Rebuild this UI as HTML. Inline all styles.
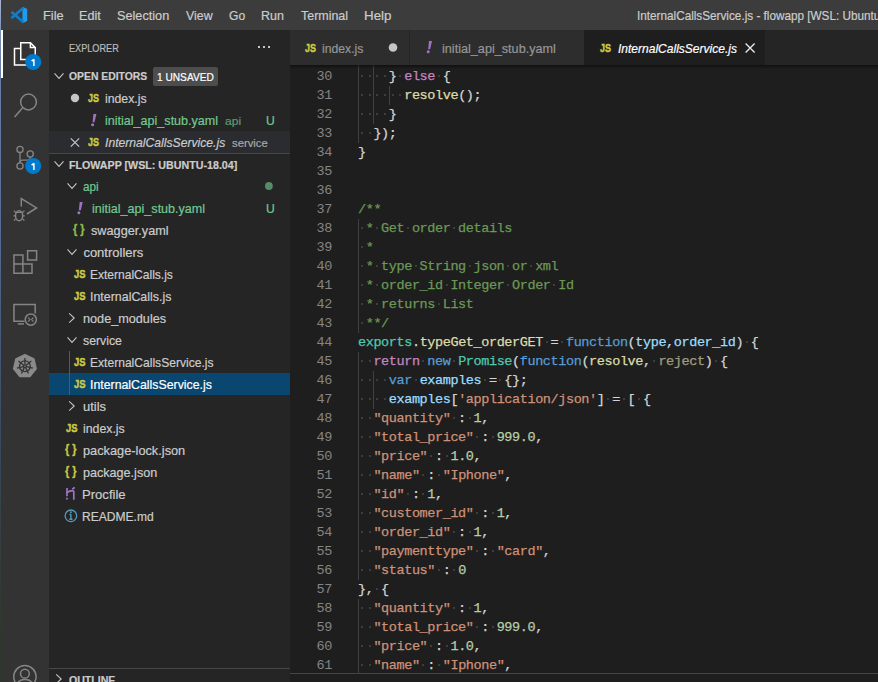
<!DOCTYPE html><html><head><meta charset="utf-8"><style>
*{margin:0;padding:0;box-sizing:border-box}
html,body{width:878px;height:682px;overflow:hidden;background:#1e1e1e}
body{position:relative;font-family:"Liberation Sans",sans-serif;font-size:13px;color:#cccccc}
.a{position:absolute}
.t{position:absolute;white-space:pre;height:22px;-webkit-text-stroke:0.2px currentColor}
.ln{position:absolute;left:290px;width:42px;text-align:right;font-family:"Liberation Mono",monospace;font-size:13.5px;letter-spacing:-0.4px;line-height:19px;color:#858585}
.cl{position:absolute;left:358px;white-space:pre;-webkit-text-stroke:0.25px currentColor;font-family:"Liberation Mono",monospace;font-size:13.5px;letter-spacing:-0.4px;line-height:19px;height:19px}
.ig{position:absolute;width:1px;height:19px;background:#404040}
.ws{position:absolute;width:2px;height:2px;background:#3d3d3d}
svg{position:absolute;left:0;top:0;overflow:visible}
</style></head><body>

<div class="a" style="left:0;top:0;width:1px;height:682px;background:linear-gradient(#a9b6d3 0px,#7f93b8 30px,#6a80a8 60px,#52698f 250px,#3a4a62 430px,#2f3b30 600px,#2c362c 682px)"></div>
<div class="a" style="left:1px;top:0;width:877px;height:30px;background:#3c3c3c"></div>
<div class="a" style="left:1px;top:30px;width:48px;height:652px;background:#333333"></div>
<div class="a" style="left:49px;top:30px;width:241px;height:652px;background:#252526"></div>
<div class="a" style="left:290px;top:30px;width:588px;height:35px;background:#252526"></div>
<div class="t" style="left:43.12px;top:5px;font:normal normal 13px/22px 'Liberation Sans',sans-serif;color:#cccccc;transform:scaleX(0.9839);transform-origin:0 0;">File</div>
<div class="t" style="left:78.93px;top:5px;font:normal normal 13px/22px 'Liberation Sans',sans-serif;color:#cccccc;transform:scaleX(0.9684);transform-origin:0 0;">Edit</div>
<div class="t" style="left:117.40px;top:5px;font:normal normal 13px/22px 'Liberation Sans',sans-serif;color:#cccccc;transform:scaleX(0.9765);transform-origin:0 0;">Selection</div>
<div class="t" style="left:185.80px;top:5px;font:normal normal 13px/22px 'Liberation Sans',sans-serif;color:#cccccc;transform:scaleX(0.9526);transform-origin:0 0;">View</div>
<div class="t" style="left:229.10px;top:5px;font:normal normal 13px/22px 'Liberation Sans',sans-serif;color:#cccccc;transform:scaleX(0.9292);transform-origin:0 0;">Go</div>
<div class="t" style="left:261.14px;top:5px;font:normal normal 13px/22px 'Liberation Sans',sans-serif;color:#cccccc;transform:scaleX(0.9594);transform-origin:0 0;">Run</div>
<div class="t" style="left:300.90px;top:5px;font:normal normal 13px/22px 'Liberation Sans',sans-serif;color:#cccccc;transform:scaleX(0.9566);transform-origin:0 0;">Terminal</div>
<div class="t" style="left:363.57px;top:5px;font:normal normal 13px/22px 'Liberation Sans',sans-serif;color:#cccccc;transform:scaleX(1.0272);transform-origin:0 0;">Help</div>
<div class="t" style="left:636.70px;top:5px;font:normal normal 13px/22px 'Liberation Sans',sans-serif;color:#cccccc;transform:scaleX(0.9029);transform-origin:0 0;">InternalCallsService.js - flowapp [WSL: Ubuntu-18.04]</div>
<svg width="878" height="682">
<polygon points="22.4,6.8 27.2,9 27.2,21 22.4,23.2" fill="#1f9cf0"/>
<line x1="22.6" y1="8.6" x2="12.2" y2="17.4" stroke="#0d7ecc" stroke-width="2.6" stroke-linecap="round"/>
<line x1="12.2" y1="12.6" x2="22.6" y2="21.4" stroke="#0d7ecc" stroke-width="2.6" stroke-linecap="round"/>
</svg>
<div class="a" style="left:1px;top:30px;width:2px;height:48px;background:#ffffff"></div>
<svg width="878" height="682" fill="none" stroke-width="1.5">
<g stroke="#ffffff">
<path d="M20.75 47.5 V42.75 H30.4 L35.25 47.6 V59.5 H20.75 V47.5"/>
<path d="M30.4 42.75 V47.6 H35.25"/>
<path d="M20.75 48.5 H14.5 V65.1 H28"/>
</g>
<circle cx="33.2" cy="62" r="8" fill="#007acc" stroke="none"/>
<g stroke="#858585">
<circle cx="28.5" cy="102" r="7.9"/>
<line x1="22.9" y1="107.6" x2="14.6" y2="116.9"/>
<circle cx="20" cy="149.4" r="3.1" stroke-width="1.3"/>
<circle cx="20" cy="166" r="3.1" stroke-width="1.3"/>
<circle cx="30.2" cy="154" r="3.1" stroke-width="1.3"/>
<line x1="20" y1="152.5" x2="20" y2="162.9" stroke-width="1.3"/>
<path d="M30.2 157.1 V157.8 Q30.2 160.2 27.8 160.2 H22.4 Q20 160.2 20 162.6" stroke-width="1.3"/>
<path d="M21.3 206.5 V198.6 L36.6 207.9 L26.9 214" />
<ellipse cx="19.1" cy="215.8" rx="3.6" ry="5"/>
<path d="M15.5 212.5 H22.7 M13.4 215.8 H15.5 M22.7 215.8 H24.8 M13.8 210.8 L15.6 212.4 M24.4 210.8 L22.6 212.4 M13.8 220.5 L15.6 219 M24.4 220.5 L22.6 219" stroke-width="1.2"/>
<path d="M13.95 255 H22.9 V273.2 H13.95 Z M13.95 264 H32 V273.2 H22.9 M27.6 250.7 H36.6 V259.9 H27.6 Z"/>
<path d="M24.5 321.2 H13.95 V304.6 H35.2 V313.5"/>
<line x1="17.8" y1="323.9" x2="24" y2="323.9"/>
<circle cx="30.8" cy="319.6" r="5.6"/>
<path d="M28.2 317.6 L30 319.6 L28.2 321.6 M33.4 317.6 L31.6 319.6 L33.4 321.6" stroke-width="1.1"/>
<circle cx="24.9" cy="676.8" r="11.2"/>
<circle cx="24.9" cy="673.7" r="4.4"/>
<path d="M16.8 684 Q19 679.4 24.9 679.4 Q30.8 679.4 33 684"/>
</g>
</svg>
<svg width="878" height="682"><polygon points="24.90,354.70 33.89,359.03 36.11,368.76 29.89,376.56 19.91,376.56 13.69,368.76 15.91,359.03" fill="#8a8a8a" stroke="#8a8a8a" stroke-width="1.5" stroke-linejoin="round"/><g stroke="#333333" stroke-width="1.3" fill="none"><circle cx="24.90" cy="366.20" r="5.4"/><circle cx="24.90" cy="366.20" r="1.4"/><line x1="24.90" y1="364.60" x2="24.90" y2="358.00"/><line x1="26.15" y1="365.20" x2="31.31" y2="361.09"/><line x1="26.46" y1="366.56" x2="32.89" y2="368.02"/><line x1="25.59" y1="367.64" x2="28.46" y2="373.59"/><line x1="24.21" y1="367.64" x2="21.34" y2="373.59"/><line x1="23.34" y1="366.56" x2="16.91" y2="368.02"/><line x1="23.65" y1="365.20" x2="18.49" y2="361.09"/></g></svg>
<svg width="878" height="682"><path d="M33.9 59.3 V65.9 M34 59.4 L31.6 61.2" stroke="#fff" stroke-width="1.5" fill="none"/></svg>
<svg width="878" height="682"><circle cx="33.2" cy="166" r="8" fill="#007acc"/></svg>
<svg width="878" height="682"><path d="M33.9 163.3 V169.9 M34 163.4 L31.6 165.2" stroke="#fff" stroke-width="1.5" fill="none"/></svg>
<div class="t" style="left:69.20px;top:37px;font:normal normal 11px/22px 'Liberation Sans',sans-serif;color:#bbbbbb;transform:scaleX(0.8305);transform-origin:0 0;">EXPLORER</div>
<div class="a" style="left:258px;top:46px;width:2px;height:2px;background:#c5c5c5"></div>
<div class="a" style="left:263px;top:46px;width:2px;height:2px;background:#c5c5c5"></div>
<div class="a" style="left:268px;top:46px;width:2px;height:2px;background:#c5c5c5"></div>
<svg width="878" height="682"><path d="M54.5 73.4 L59.0 78.4 L63.5 73.4" fill="none" stroke="#c5c5c5" stroke-width="1.1"/></svg>
<div class="t" style="left:69.20px;top:65px;font:normal bold 11px/22px 'Liberation Sans',sans-serif;color:#cccccc;transform:scaleX(0.9420);transform-origin:0 0;">OPEN EDITORS</div>
<div class="a" style="left:153px;top:67px;width:65px;height:19px;background:#4d4d4d;border-radius:2px"></div>
<div class="t" style="left:157.00px;top:67px;font:normal normal 11px/21px 'Liberation Sans',sans-serif;color:#ffffff;transform:scaleX(0.9222);transform-origin:0 0;">1 UNSAVED</div>
<svg width="878" height="682"><circle cx="75" cy="98" r="4.2" fill="#c5c5c5"/></svg>
<div class="t" style="left:88.00px;top:87px;font:normal bold 11px/22px 'Liberation Sans',sans-serif;color:#cbcb41;transform:scaleX(0.8157);transform-origin:0 0;-webkit-text-stroke:0.45px #cbcb41;">JS</div>
<div class="t" style="left:105.00px;top:88px;font:normal normal 13px/22px 'Liberation Sans',sans-serif;color:#cccccc;transform:scaleX(0.9422);transform-origin:0 0;">index.js</div>
<svg width="878" height="682"><polygon points="93.4,114.0 96.4,114.0 94.5,122.2 92.6,122.2" fill="#a074c4"/><circle cx="92.6" cy="124.8" r="1.5" fill="#a074c4"/></svg>
<div class="t" style="left:105.30px;top:110px;font:normal normal 13px/22px 'Liberation Sans',sans-serif;color:#73c991;transform:scaleX(0.9661);transform-origin:0 0;">initial_api_stub.yaml</div>
<div class="t" style="left:224.90px;top:110px;font:normal normal 11.5px/22px 'Liberation Sans',sans-serif;color:#73c991;transform:scaleX(1.0479);transform-origin:0 0;opacity:.7;">api</div>
<div class="t" style="left:266.00px;top:110px;font:normal normal 12px/22px 'Liberation Sans',sans-serif;color:#73c991;transform:scaleX(1.0125);transform-origin:0 0;">U</div>
<div class="a" style="left:49px;top:131px;width:241px;height:22px;background:#2b2c2f"></div>
<svg width="878" height="682"><path d="M70.8 138.3 L79.2 146.7 M79.2 138.3 L70.8 146.7" stroke="#c5c5c5" stroke-width="1.2"/></svg>
<div class="t" style="left:88.00px;top:131px;font:normal bold 11px/22px 'Liberation Sans',sans-serif;color:#cbcb41;transform:scaleX(0.8157);transform-origin:0 0;-webkit-text-stroke:0.45px #cbcb41;">JS</div>
<div class="t" style="left:105.00px;top:132px;font:italic normal 13px/22px 'Liberation Sans',sans-serif;color:#cccccc;transform:scaleX(0.9349);transform-origin:0 0;">InternalCallsService.js</div>
<div class="t" style="left:231.70px;top:132px;font:normal normal 11.5px/22px 'Liberation Sans',sans-serif;color:#a8a8a8;transform:scaleX(0.9797);transform-origin:0 0;">service</div>
<div class="a" style="left:49px;top:153px;width:241px;height:1px;background:#474748"></div>
<svg width="878" height="682"><path d="M54.5 161.4 L59.0 166.4 L63.5 161.4" fill="none" stroke="#c5c5c5" stroke-width="1.1"/></svg>
<div class="t" style="left:69.20px;top:154px;font:normal bold 11px/22px 'Liberation Sans',sans-serif;color:#cccccc;transform:scaleX(0.9707);transform-origin:0 0;">FLOWAPP [WSL: UBUNTU-18.04]</div>
<div class="a" style="left:49px;top:373px;width:241px;height:22px;background:#094771"></div>
<div class="a" style="left:69px;top:351px;width:1px;height:44px;background:#585858"></div>
<svg width="878" height="682"><path d="M67.5 183.4 L72.0 188.4 L76.5 183.4" fill="none" stroke="#c5c5c5" stroke-width="1.1"/></svg>
<div class="t" style="left:82.90px;top:175.5px;font:normal normal 13px/22px 'Liberation Sans',sans-serif;color:#73c991;transform:scaleX(0.8992);transform-origin:0 0;">api</div>
<svg width="878" height="682"><polygon points="79.7,202.0 82.7,202.0 80.8,210.2 78.9,210.2" fill="#a074c4"/><circle cx="78.9" cy="212.8" r="1.5" fill="#a074c4"/></svg>
<div class="t" style="left:91.60px;top:197.5px;font:normal normal 13px/22px 'Liberation Sans',sans-serif;color:#73c991;transform:scaleX(0.9661);transform-origin:0 0;">initial_api_stub.yaml</div>
<div class="t" style="left:73.30px;top:218px;font:normal bold 12.5px/22px 'Liberation Sans',sans-serif;color:#8dc149;transform:scaleX(0.8772);transform-origin:0 0;-webkit-text-stroke:0.3px #8dc149;">{ }</div>
<div class="t" style="left:91.30px;top:219.5px;font:normal normal 13px/22px 'Liberation Sans',sans-serif;color:#cccccc;transform:scaleX(0.9762);transform-origin:0 0;">swagger.yaml</div>
<svg width="878" height="682"><path d="M67.5 249.4 L72.0 254.4 L76.5 249.4" fill="none" stroke="#c5c5c5" stroke-width="1.1"/></svg>
<div class="t" style="left:83.40px;top:241.5px;font:normal normal 13px/22px 'Liberation Sans',sans-serif;color:#cccccc;">controllers</div>
<div class="t" style="left:73.60px;top:263px;font:normal bold 11px/22px 'Liberation Sans',sans-serif;color:#cbcb41;transform:scaleX(0.8538);transform-origin:0 0;-webkit-text-stroke:0.45px #cbcb41;">JS</div>
<div class="t" style="left:90.48px;top:263.5px;font:normal normal 13px/22px 'Liberation Sans',sans-serif;color:#cccccc;transform:scaleX(0.9250);transform-origin:0 0;">ExternalCalls.js</div>
<div class="t" style="left:73.60px;top:285px;font:normal bold 11px/22px 'Liberation Sans',sans-serif;color:#cbcb41;transform:scaleX(0.8538);transform-origin:0 0;-webkit-text-stroke:0.45px #cbcb41;">JS</div>
<div class="t" style="left:90.45px;top:285.5px;font:normal normal 13px/22px 'Liberation Sans',sans-serif;color:#cccccc;transform:scaleX(0.9545);transform-origin:0 0;">InternalCalls.js</div>
<svg width="878" height="682"><path d="M69.2 313.4 L74.2 318.0 L69.2 322.6" fill="none" stroke="#c5c5c5" stroke-width="1.1"/></svg>
<div class="t" style="left:83.40px;top:307.5px;font:normal normal 13px/22px 'Liberation Sans',sans-serif;color:#cccccc;transform:scaleX(0.9745);transform-origin:0 0;">node_modules</div>
<svg width="878" height="682"><path d="M67.5 337.4 L72.0 342.4 L76.5 337.4" fill="none" stroke="#c5c5c5" stroke-width="1.1"/></svg>
<div class="t" style="left:83.40px;top:329.5px;font:normal normal 13px/22px 'Liberation Sans',sans-serif;color:#cccccc;transform:scaleX(0.9451);transform-origin:0 0;">service</div>
<div class="t" style="left:73.60px;top:351px;font:normal bold 11px/22px 'Liberation Sans',sans-serif;color:#cbcb41;transform:scaleX(0.8538);transform-origin:0 0;-webkit-text-stroke:0.45px #cbcb41;">JS</div>
<div class="t" style="left:90.47px;top:351.5px;font:normal normal 13px/22px 'Liberation Sans',sans-serif;color:#cccccc;transform:scaleX(0.9288);transform-origin:0 0;">ExternalCallsService.js</div>
<div class="t" style="left:73.60px;top:373px;font:normal bold 11px/22px 'Liberation Sans',sans-serif;color:#cbcb41;transform:scaleX(0.8538);transform-origin:0 0;-webkit-text-stroke:0.45px #cbcb41;">JS</div>
<div class="t" style="left:90.45px;top:373.5px;font:normal normal 13px/22px 'Liberation Sans',sans-serif;color:#ffffff;transform:scaleX(0.9477);transform-origin:0 0;">InternalCallsService.js</div>
<svg width="878" height="682"><path d="M69.2 401.4 L74.2 406.0 L69.2 410.6" fill="none" stroke="#c5c5c5" stroke-width="1.1"/></svg>
<div class="t" style="left:83.20px;top:395.5px;font:normal normal 13px/22px 'Liberation Sans',sans-serif;color:#cccccc;transform:scaleX(0.9950);transform-origin:0 0;">utils</div>
<div class="t" style="left:65.70px;top:417px;font:normal bold 11px/22px 'Liberation Sans',sans-serif;color:#cbcb41;transform:scaleX(0.8538);transform-origin:0 0;-webkit-text-stroke:0.45px #cbcb41;">JS</div>
<div class="t" style="left:83.20px;top:417.5px;font:normal normal 13px/22px 'Liberation Sans',sans-serif;color:#cccccc;transform:scaleX(0.9467);transform-origin:0 0;">index.js</div>
<div class="t" style="left:65.00px;top:438px;font:normal bold 12.5px/22px 'Liberation Sans',sans-serif;color:#cbcb41;transform:scaleX(0.8772);transform-origin:0 0;-webkit-text-stroke:0.3px #cbcb41;">{ }</div>
<div class="t" style="left:83.20px;top:439.5px;font:normal normal 13px/22px 'Liberation Sans',sans-serif;color:#cccccc;transform:scaleX(0.9824);transform-origin:0 0;">package-lock.json</div>
<div class="t" style="left:65.00px;top:460px;font:normal bold 12.5px/22px 'Liberation Sans',sans-serif;color:#cbcb41;transform:scaleX(0.8772);transform-origin:0 0;-webkit-text-stroke:0.3px #cbcb41;">{ }</div>
<div class="t" style="left:83.20px;top:461.5px;font:normal normal 13px/22px 'Liberation Sans',sans-serif;color:#cccccc;transform:scaleX(0.9688);transform-origin:0 0;">package.json</div>
<svg width="878" height="682"><path d="M67 487.9 V496.2 M67 492.6 Q69.5 490.6 72.6 490.6 Q73.8 490.6 73.8 492 V499.8 M72.2 488.9 L74.8 487.4" fill="none" stroke="#a074c4" stroke-width="1.7"/><polygon points="66.2,497.3 68.6,498.7 66.2,500" fill="#a074c4"/></svg>
<div class="t" style="left:82.19px;top:483.5px;font:normal normal 13px/22px 'Liberation Sans',sans-serif;color:#cccccc;transform:scaleX(1.0067);transform-origin:0 0;">Procfile</div>
<svg width="878" height="682"><circle cx="70.9" cy="515.8" r="5.8" fill="none" stroke="#519aba" stroke-width="1.3"/><path d="M70.9 514.4 V519.2 M69.4 514.4 H71.2 M69.3 519.3 H72.5" stroke="#519aba" stroke-width="1.4" fill="none"/><circle cx="70.9" cy="512.3" r="0.95" fill="#519aba"/></svg>
<div class="t" style="left:82.27px;top:505.5px;font:normal normal 13px/22px 'Liberation Sans',sans-serif;color:#cccccc;transform:scaleX(0.9282);transform-origin:0 0;">README.md</div>
<svg width="878" height="682"><circle cx="268.9" cy="186" r="3.9" fill="#73c991" opacity=".62"/></svg>
<div class="t" style="left:266.00px;top:198px;font:normal normal 12px/22px 'Liberation Sans',sans-serif;color:#73c991;transform:scaleX(1.0125);transform-origin:0 0;">U</div>
<div class="a" style="left:49px;top:668px;width:241px;height:1px;background:#474748"></div>
<svg width="878" height="682"><path d="M56.2 674.4 L61.2 679.0 L56.2 683.6" fill="none" stroke="#c5c5c5" stroke-width="1.1"/></svg>
<div class="t" style="left:69.20px;top:669px;font:normal bold 11px/22px 'Liberation Sans',sans-serif;color:#cccccc;transform:scaleX(0.9596);transform-origin:0 0;">OUTLINE</div>
<div class="a" style="left:290px;top:30px;width:119px;height:35px;background:#2d2d2d"></div>
<div class="a" style="left:410px;top:30px;width:174px;height:35px;background:#2d2d2d"></div>
<div class="a" style="left:584px;top:30px;width:181px;height:35px;background:#1e1e1e"></div>
<div class="t" style="left:304.80px;top:31px;font:normal bold 11px/35px 'Liberation Sans',sans-serif;color:#cbcb41;transform:scaleX(0.8157);transform-origin:0 0;-webkit-text-stroke:0.45px #cbcb41;">JS</div>
<div class="t" style="left:322.30px;top:31px;font:normal normal 13px/35px 'Liberation Sans',sans-serif;color:#969696;transform:scaleX(0.9399);transform-origin:0 0;">index.js</div>
<svg width="878" height="682"><circle cx="393" cy="47.5" r="4.3" fill="#c5c5c5"/></svg>
<svg width="878" height="682"><polygon points="429.0,41.0 432.0,41.0 430.1,49.2 428.2,49.2" fill="#a074c4"/><circle cx="428.2" cy="51.8" r="1.5" fill="#a074c4"/></svg>
<div class="t" style="left:442.00px;top:31px;font:normal normal 13px/35px 'Liberation Sans',sans-serif;color:#969696;transform:scaleX(0.9729);transform-origin:0 0;">initial_api_stub.yaml</div>
<div class="t" style="left:600.00px;top:31px;font:normal bold 11px/35px 'Liberation Sans',sans-serif;color:#cbcb41;transform:scaleX(0.8157);transform-origin:0 0;-webkit-text-stroke:0.45px #cbcb41;">JS</div>
<div class="t" style="left:617.60px;top:31px;font:italic normal 13px/35px 'Liberation Sans',sans-serif;color:#ffffff;transform:scaleX(0.9248);transform-origin:0 0;">InternalCallsService.js</div>
<svg width="878" height="682"><path d="M745.6 43.4 L754.6 52.4 M754.6 43.4 L745.6 52.4" stroke="#e8e8e8" stroke-width="1.35"/></svg>
<div class="ln" style="top:67px">30</div>
<div class="ig" style="left:358.0px;top:65px;height:21px"></div>
<div class="ig" style="left:373.4px;top:65px;height:21px"></div>
<i class="ws" style="left:360.85px;top:75px"></i>
<i class="ws" style="left:368.55px;top:75px"></i>
<i class="ws" style="left:376.25px;top:75px"></i>
<i class="ws" style="left:383.95px;top:75px"></i>
<i class="ws" style="left:399.35px;top:75px"></i>
<i class="ws" style="left:437.85px;top:75px"></i>
<div class="cl" style="top:67px"><span style="color:#d4d4d4;">&nbsp;&nbsp;&nbsp;&nbsp;</span><span style="color:#d4d4d4;">}</span><span style="color:#d4d4d4;">&nbsp;</span><span style="color:#c586c0;">else</span><span style="color:#d4d4d4;">&nbsp;</span><span style="color:#d4d4d4;">{</span></div>
<div class="ln" style="top:86px">31</div>
<div class="ig" style="left:358.0px;top:86px;height:19px"></div>
<div class="ig" style="left:373.4px;top:86px;height:19px"></div>
<div class="ig" style="left:388.8px;top:86px;height:19px"></div>
<i class="ws" style="left:360.85px;top:94px"></i>
<i class="ws" style="left:368.55px;top:94px"></i>
<i class="ws" style="left:376.25px;top:94px"></i>
<i class="ws" style="left:383.95px;top:94px"></i>
<i class="ws" style="left:391.65px;top:94px"></i>
<i class="ws" style="left:399.35px;top:94px"></i>
<div class="cl" style="top:86px"><span style="color:#d4d4d4;">&nbsp;&nbsp;&nbsp;&nbsp;&nbsp;&nbsp;</span><span style="color:#dcdcaa;">resolve</span><span style="color:#d4d4d4;">();</span></div>
<div class="ln" style="top:105px">32</div>
<div class="ig" style="left:358.0px;top:105px;height:19px"></div>
<div class="ig" style="left:373.4px;top:105px;height:19px"></div>
<i class="ws" style="left:360.85px;top:113px"></i>
<i class="ws" style="left:368.55px;top:113px"></i>
<i class="ws" style="left:376.25px;top:113px"></i>
<i class="ws" style="left:383.95px;top:113px"></i>
<div class="cl" style="top:105px"><span style="color:#d4d4d4;">&nbsp;&nbsp;&nbsp;&nbsp;</span><span style="color:#d4d4d4;">}</span></div>
<div class="ln" style="top:124px">33</div>
<div class="ig" style="left:358.0px;top:124px;height:19px"></div>
<i class="ws" style="left:360.85px;top:132px"></i>
<i class="ws" style="left:368.55px;top:132px"></i>
<div class="cl" style="top:124px"><span style="color:#d4d4d4;">&nbsp;&nbsp;</span><span style="color:#d4d4d4;">});</span></div>
<div class="ln" style="top:143px">34</div>
<div class="cl" style="top:143px"><span style="color:#d4d4d4;">}</span></div>
<div class="ln" style="top:162px">35</div>
<div class="ln" style="top:181px">36</div>
<div class="ln" style="top:200px">37</div>
<div class="cl" style="top:200px"><span style="color:#6a9955;">/**</span></div>
<div class="ln" style="top:219px">38</div>
<div class="ig" style="left:358.0px;top:219px;height:19px"></div>
<i class="ws" style="left:360.85px;top:227px"></i>
<i class="ws" style="left:376.25px;top:227px"></i>
<i class="ws" style="left:407.05px;top:227px"></i>
<i class="ws" style="left:453.25px;top:227px"></i>
<div class="cl" style="top:219px"><span style="color:#6a9955;">&nbsp;*&nbsp;Get&nbsp;order&nbsp;details</span></div>
<div class="ln" style="top:238px">39</div>
<div class="ig" style="left:358.0px;top:238px;height:19px"></div>
<i class="ws" style="left:360.85px;top:246px"></i>
<div class="cl" style="top:238px"><span style="color:#6a9955;">&nbsp;*</span></div>
<div class="ln" style="top:257px">40</div>
<div class="ig" style="left:358.0px;top:257px;height:19px"></div>
<i class="ws" style="left:360.85px;top:265px"></i>
<i class="ws" style="left:376.25px;top:265px"></i>
<i class="ws" style="left:414.75px;top:265px"></i>
<i class="ws" style="left:468.65px;top:265px"></i>
<i class="ws" style="left:507.15px;top:265px"></i>
<i class="ws" style="left:530.25px;top:265px"></i>
<div class="cl" style="top:257px"><span style="color:#6a9955;">&nbsp;*&nbsp;type&nbsp;String&nbsp;json&nbsp;or&nbsp;xml</span></div>
<div class="ln" style="top:276px">41</div>
<div class="ig" style="left:358.0px;top:276px;height:19px"></div>
<i class="ws" style="left:360.85px;top:284px"></i>
<i class="ws" style="left:376.25px;top:284px"></i>
<i class="ws" style="left:445.55px;top:284px"></i>
<i class="ws" style="left:507.15px;top:284px"></i>
<i class="ws" style="left:553.35px;top:284px"></i>
<div class="cl" style="top:276px"><span style="color:#6a9955;">&nbsp;*&nbsp;order_id&nbsp;Integer&nbsp;Order&nbsp;Id</span></div>
<div class="ln" style="top:295px">42</div>
<div class="ig" style="left:358.0px;top:295px;height:19px"></div>
<i class="ws" style="left:360.85px;top:303px"></i>
<i class="ws" style="left:376.25px;top:303px"></i>
<i class="ws" style="left:437.85px;top:303px"></i>
<div class="cl" style="top:295px"><span style="color:#6a9955;">&nbsp;*&nbsp;returns&nbsp;List</span></div>
<div class="ln" style="top:314px">43</div>
<div class="ig" style="left:358.0px;top:314px;height:19px"></div>
<i class="ws" style="left:360.85px;top:322px"></i>
<div class="cl" style="top:314px"><span style="color:#6a9955;">&nbsp;**/</span></div>
<div class="ln" style="top:333px">44</div>
<i class="ws" style="left:545.65px;top:341px"></i>
<i class="ws" style="left:561.05px;top:341px"></i>
<i class="ws" style="left:745.85px;top:341px"></i>
<div class="cl" style="top:333px"><span style="color:#4ec9b0;">exports</span><span style="color:#d4d4d4;">.</span><span style="color:#dcdcaa;">typeGet_orderGET</span><span style="color:#d4d4d4;">&nbsp;=&nbsp;</span><span style="color:#569cd6;">function</span><span style="color:#d4d4d4;">(</span><span style="color:#9cdcfe;">type</span><span style="color:#d4d4d4;">,</span><span style="color:#9cdcfe;">order_id</span><span style="color:#d4d4d4;">)&nbsp;{</span></div>
<div class="ln" style="top:352px">45</div>
<div class="ig" style="left:358.0px;top:352px;height:19px"></div>
<i class="ws" style="left:360.85px;top:360px"></i>
<i class="ws" style="left:368.55px;top:360px"></i>
<i class="ws" style="left:422.45px;top:360px"></i>
<i class="ws" style="left:453.25px;top:360px"></i>
<i class="ws" style="left:653.45px;top:360px"></i>
<i class="ws" style="left:715.05px;top:360px"></i>
<div class="cl" style="top:352px"><span style="color:#d4d4d4;">&nbsp;&nbsp;</span><span style="color:#c586c0;">return</span><span style="color:#d4d4d4;">&nbsp;</span><span style="color:#569cd6;">new</span><span style="color:#d4d4d4;">&nbsp;</span><span style="color:#4ec9b0;">Promise</span><span style="color:#d4d4d4;">(</span><span style="color:#569cd6;">function</span><span style="color:#d4d4d4;">(</span><span style="color:#dcdcaa;">resolve</span><span style="color:#d4d4d4;">,&nbsp;</span><span style="color:#dcdcaa;opacity:.67;">reject</span><span style="color:#d4d4d4;">)&nbsp;{</span></div>
<div class="ln" style="top:371px">46</div>
<div class="ig" style="left:358.0px;top:371px;height:19px"></div>
<div class="ig" style="left:373.4px;top:371px;height:19px"></div>
<i class="ws" style="left:360.85px;top:379px"></i>
<i class="ws" style="left:368.55px;top:379px"></i>
<i class="ws" style="left:376.25px;top:379px"></i>
<i class="ws" style="left:383.95px;top:379px"></i>
<i class="ws" style="left:414.75px;top:379px"></i>
<i class="ws" style="left:484.05px;top:379px"></i>
<i class="ws" style="left:499.45px;top:379px"></i>
<div class="cl" style="top:371px"><span style="color:#d4d4d4;">&nbsp;&nbsp;&nbsp;&nbsp;</span><span style="color:#569cd6;">var</span><span style="color:#d4d4d4;">&nbsp;</span><span style="color:#9cdcfe;">examples</span><span style="color:#d4d4d4;">&nbsp;=&nbsp;{};</span></div>
<div class="ln" style="top:390px">47</div>
<div class="ig" style="left:358.0px;top:390px;height:19px"></div>
<div class="ig" style="left:373.4px;top:390px;height:19px"></div>
<i class="ws" style="left:360.85px;top:398px"></i>
<i class="ws" style="left:368.55px;top:398px"></i>
<i class="ws" style="left:376.25px;top:398px"></i>
<i class="ws" style="left:383.95px;top:398px"></i>
<i class="ws" style="left:607.25px;top:398px"></i>
<i class="ws" style="left:622.65px;top:398px"></i>
<i class="ws" style="left:638.05px;top:398px"></i>
<div class="cl" style="top:390px"><span style="color:#d4d4d4;">&nbsp;&nbsp;&nbsp;&nbsp;</span><span style="color:#9cdcfe;">examples</span><span style="color:#d4d4d4;">[</span><span style="color:#ce9178;">&#x27;application/json&#x27;</span><span style="color:#d4d4d4;">]&nbsp;=&nbsp;[&nbsp;{</span></div>
<div class="ln" style="top:409px">48</div>
<div class="ig" style="left:358.0px;top:409px;height:19px"></div>
<i class="ws" style="left:360.85px;top:417px"></i>
<i class="ws" style="left:368.55px;top:417px"></i>
<i class="ws" style="left:453.25px;top:417px"></i>
<i class="ws" style="left:468.65px;top:417px"></i>
<div class="cl" style="top:409px"><span style="color:#d4d4d4;">&nbsp;&nbsp;</span><span style="color:#ce9178;">&quot;quantity&quot;</span><span style="color:#d4d4d4;">&nbsp;:&nbsp;</span><span style="color:#b5cea8;">1</span><span style="color:#d4d4d4;">,</span></div>
<div class="ln" style="top:428px">49</div>
<div class="ig" style="left:358.0px;top:428px;height:19px"></div>
<i class="ws" style="left:360.85px;top:436px"></i>
<i class="ws" style="left:368.55px;top:436px"></i>
<i class="ws" style="left:476.35px;top:436px"></i>
<i class="ws" style="left:491.75px;top:436px"></i>
<div class="cl" style="top:428px"><span style="color:#d4d4d4;">&nbsp;&nbsp;</span><span style="color:#ce9178;">&quot;total_price&quot;</span><span style="color:#d4d4d4;">&nbsp;:&nbsp;</span><span style="color:#b5cea8;">999.0</span><span style="color:#d4d4d4;">,</span></div>
<div class="ln" style="top:447px">50</div>
<div class="ig" style="left:358.0px;top:447px;height:19px"></div>
<i class="ws" style="left:360.85px;top:455px"></i>
<i class="ws" style="left:368.55px;top:455px"></i>
<i class="ws" style="left:430.15px;top:455px"></i>
<i class="ws" style="left:445.55px;top:455px"></i>
<div class="cl" style="top:447px"><span style="color:#d4d4d4;">&nbsp;&nbsp;</span><span style="color:#ce9178;">&quot;price&quot;</span><span style="color:#d4d4d4;">&nbsp;:&nbsp;</span><span style="color:#b5cea8;">1.0</span><span style="color:#d4d4d4;">,</span></div>
<div class="ln" style="top:466px">51</div>
<div class="ig" style="left:358.0px;top:466px;height:19px"></div>
<i class="ws" style="left:360.85px;top:474px"></i>
<i class="ws" style="left:368.55px;top:474px"></i>
<i class="ws" style="left:422.45px;top:474px"></i>
<i class="ws" style="left:437.85px;top:474px"></i>
<div class="cl" style="top:466px"><span style="color:#d4d4d4;">&nbsp;&nbsp;</span><span style="color:#ce9178;">&quot;name&quot;</span><span style="color:#d4d4d4;">&nbsp;:&nbsp;</span><span style="color:#ce9178;">&quot;Iphone&quot;</span><span style="color:#d4d4d4;">,</span></div>
<div class="ln" style="top:485px">52</div>
<div class="ig" style="left:358.0px;top:485px;height:19px"></div>
<i class="ws" style="left:360.85px;top:493px"></i>
<i class="ws" style="left:368.55px;top:493px"></i>
<i class="ws" style="left:407.05px;top:493px"></i>
<i class="ws" style="left:422.45px;top:493px"></i>
<div class="cl" style="top:485px"><span style="color:#d4d4d4;">&nbsp;&nbsp;</span><span style="color:#ce9178;">&quot;id&quot;</span><span style="color:#d4d4d4;">&nbsp;:&nbsp;</span><span style="color:#b5cea8;">1</span><span style="color:#d4d4d4;">,</span></div>
<div class="ln" style="top:504px">53</div>
<div class="ig" style="left:358.0px;top:504px;height:19px"></div>
<i class="ws" style="left:360.85px;top:512px"></i>
<i class="ws" style="left:368.55px;top:512px"></i>
<i class="ws" style="left:476.35px;top:512px"></i>
<i class="ws" style="left:491.75px;top:512px"></i>
<div class="cl" style="top:504px"><span style="color:#d4d4d4;">&nbsp;&nbsp;</span><span style="color:#ce9178;">&quot;customer_id&quot;</span><span style="color:#d4d4d4;">&nbsp;:&nbsp;</span><span style="color:#b5cea8;">1</span><span style="color:#d4d4d4;">,</span></div>
<div class="ln" style="top:523px">54</div>
<div class="ig" style="left:358.0px;top:523px;height:19px"></div>
<i class="ws" style="left:360.85px;top:531px"></i>
<i class="ws" style="left:368.55px;top:531px"></i>
<i class="ws" style="left:453.25px;top:531px"></i>
<i class="ws" style="left:468.65px;top:531px"></i>
<div class="cl" style="top:523px"><span style="color:#d4d4d4;">&nbsp;&nbsp;</span><span style="color:#ce9178;">&quot;order_id&quot;</span><span style="color:#d4d4d4;">&nbsp;:&nbsp;</span><span style="color:#b5cea8;">1</span><span style="color:#d4d4d4;">,</span></div>
<div class="ln" style="top:542px">55</div>
<div class="ig" style="left:358.0px;top:542px;height:19px"></div>
<i class="ws" style="left:360.85px;top:550px"></i>
<i class="ws" style="left:368.55px;top:550px"></i>
<i class="ws" style="left:476.35px;top:550px"></i>
<i class="ws" style="left:491.75px;top:550px"></i>
<div class="cl" style="top:542px"><span style="color:#d4d4d4;">&nbsp;&nbsp;</span><span style="color:#ce9178;">&quot;paymenttype&quot;</span><span style="color:#d4d4d4;">&nbsp;:&nbsp;</span><span style="color:#ce9178;">&quot;card&quot;</span><span style="color:#d4d4d4;">,</span></div>
<div class="ln" style="top:561px">56</div>
<div class="ig" style="left:358.0px;top:561px;height:19px"></div>
<i class="ws" style="left:360.85px;top:569px"></i>
<i class="ws" style="left:368.55px;top:569px"></i>
<i class="ws" style="left:437.85px;top:569px"></i>
<i class="ws" style="left:453.25px;top:569px"></i>
<div class="cl" style="top:561px"><span style="color:#d4d4d4;">&nbsp;&nbsp;</span><span style="color:#ce9178;">&quot;status&quot;</span><span style="color:#d4d4d4;">&nbsp;:&nbsp;</span><span style="color:#b5cea8;">0</span></div>
<div class="ln" style="top:580px">57</div>
<i class="ws" style="left:376.25px;top:588px"></i>
<div class="cl" style="top:580px"><span style="color:#d4d4d4;">},&nbsp;{</span></div>
<div class="ln" style="top:599px">58</div>
<div class="ig" style="left:358.0px;top:599px;height:19px"></div>
<i class="ws" style="left:360.85px;top:607px"></i>
<i class="ws" style="left:368.55px;top:607px"></i>
<i class="ws" style="left:453.25px;top:607px"></i>
<i class="ws" style="left:468.65px;top:607px"></i>
<div class="cl" style="top:599px"><span style="color:#d4d4d4;">&nbsp;&nbsp;</span><span style="color:#ce9178;">&quot;quantity&quot;</span><span style="color:#d4d4d4;">&nbsp;:&nbsp;</span><span style="color:#b5cea8;">1</span><span style="color:#d4d4d4;">,</span></div>
<div class="ln" style="top:618px">59</div>
<div class="ig" style="left:358.0px;top:618px;height:19px"></div>
<i class="ws" style="left:360.85px;top:626px"></i>
<i class="ws" style="left:368.55px;top:626px"></i>
<i class="ws" style="left:476.35px;top:626px"></i>
<i class="ws" style="left:491.75px;top:626px"></i>
<div class="cl" style="top:618px"><span style="color:#d4d4d4;">&nbsp;&nbsp;</span><span style="color:#ce9178;">&quot;total_price&quot;</span><span style="color:#d4d4d4;">&nbsp;:&nbsp;</span><span style="color:#b5cea8;">999.0</span><span style="color:#d4d4d4;">,</span></div>
<div class="ln" style="top:637px">60</div>
<div class="ig" style="left:358.0px;top:637px;height:19px"></div>
<i class="ws" style="left:360.85px;top:645px"></i>
<i class="ws" style="left:368.55px;top:645px"></i>
<i class="ws" style="left:430.15px;top:645px"></i>
<i class="ws" style="left:445.55px;top:645px"></i>
<div class="cl" style="top:637px"><span style="color:#d4d4d4;">&nbsp;&nbsp;</span><span style="color:#ce9178;">&quot;price&quot;</span><span style="color:#d4d4d4;">&nbsp;:&nbsp;</span><span style="color:#b5cea8;">1.0</span><span style="color:#d4d4d4;">,</span></div>
<div class="ln" style="top:656px">61</div>
<div class="ig" style="left:358.0px;top:656px;height:19px"></div>
<i class="ws" style="left:360.85px;top:664px"></i>
<i class="ws" style="left:368.55px;top:664px"></i>
<i class="ws" style="left:422.45px;top:664px"></i>
<i class="ws" style="left:437.85px;top:664px"></i>
<div class="cl" style="top:656px"><span style="color:#d4d4d4;">&nbsp;&nbsp;</span><span style="color:#ce9178;">&quot;name&quot;</span><span style="color:#d4d4d4;">&nbsp;:&nbsp;</span><span style="color:#ce9178;">&quot;Iphone&quot;</span><span style="color:#d4d4d4;">,</span></div>
<div class="a" style="left:290px;top:65px;width:588px;height:4px;background:linear-gradient(rgba(0,0,0,.45),rgba(0,0,0,0))"></div>
<div class="a" style="left:290px;top:673px;width:588px;height:1px;background:#454545"></div>
<div class="a" style="left:290px;top:674px;width:588px;height:8px;background:#1e1e1e"></div>
</body></html>
